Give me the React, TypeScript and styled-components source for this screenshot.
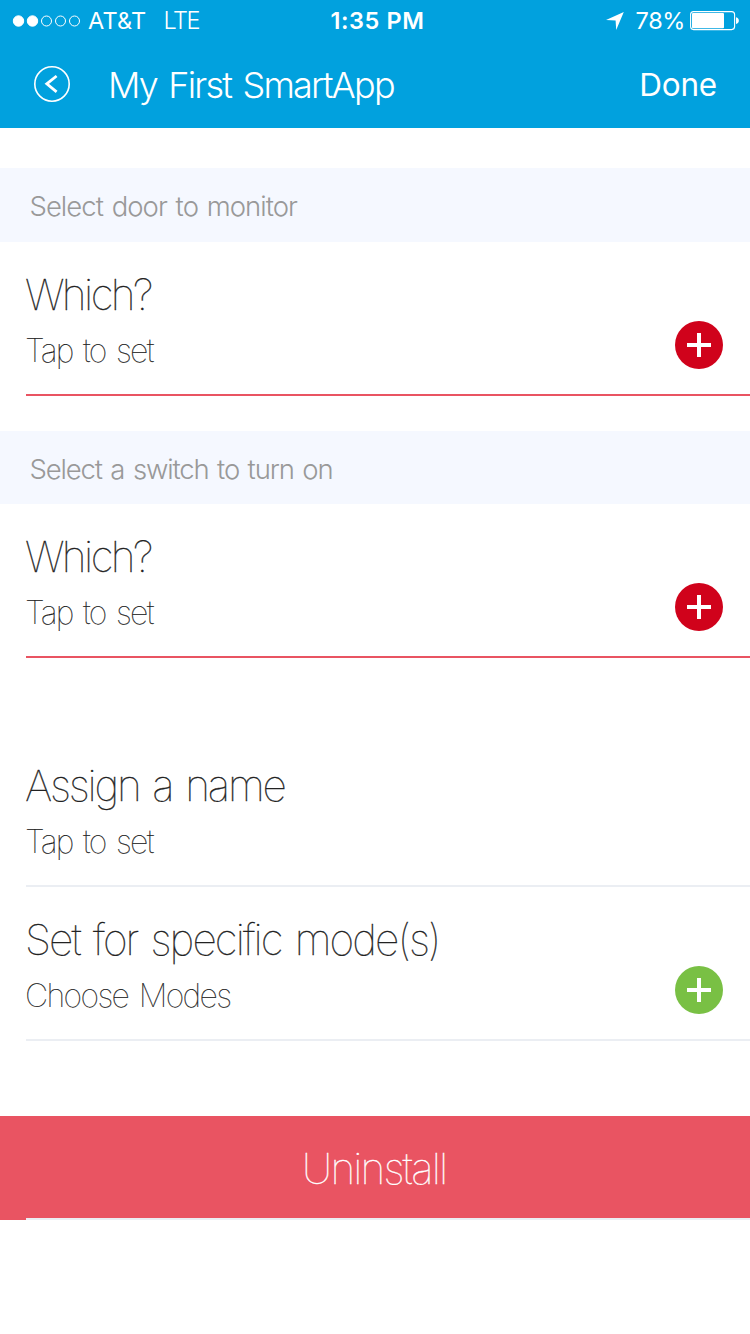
import React from "react";
import styled, { createGlobalStyle } from "styled-components";

const GlobalStyle = createGlobalStyle`
  * { box-sizing: border-box; }
  body { margin: 0; background: #fff; font-family: Inter, "Liberation Sans", sans-serif; }
`;

const Screen = styled.main`
  width: 750px;
  height: 1334px;
  overflow: hidden;
  background: #fff;
`;

const Header = styled.header`
  height: 128px;
  background: #01a1de;
  color: #fff;
`;

const StatusBar = styled.div`
  display: grid;
  grid-template-columns: 1fr auto 1fr;
  align-items: center;
  height: 42px;
  padding: 0 10px 0 12px;
`;

const StatusGroup = styled.div<{ $end?: boolean }>`
  display: flex;
  align-items: center;
  justify-content: ${(p) => (p.$end ? "flex-end" : "flex-start")};
`;

const StatusText = styled.span<{ $weight?: number; $spacing?: number; $left?: number }>`
  font-size: 23.5px;
  line-height: 42px;
  white-space: nowrap;
  font-weight: ${(p) => p.$weight ?? 400};
  letter-spacing: ${(p) => p.$spacing ?? 0}px;
  margin-left: ${(p) => p.$left ?? 0}px;
`;

const NavBar = styled.nav`
  display: flex;
  align-items: center;
  height: 86px;
  padding: 0 33px 2px 33px;
`;

const BackButton = styled.button`
  display: flex;
  padding: 0;
  border: 0;
  background: none;
  color: inherit;
`;

const NavTitle = styled.h1`
  flex: 1;
  margin: 1px 0 0 37px;
  font-size: 36px;
  font-weight: 300;
  letter-spacing: -1.8px;
  word-spacing: 3px;
  line-height: 44px;
`;

const DoneButton = styled.button`
  margin-top: 2px;
  padding: 0;
  border: 0;
  background: none;
  color: inherit;
  font: 400 31.5px/44px Inter, "Liberation Sans", sans-serif;
  letter-spacing: -0.2px;
`;

const Section = styled.section<{ $top: number }>`
  padding-top: ${(p) => p.$top}px;
`;

const SectionHeading = styled.h2<{ $height: number; $spacing: number }>`
  height: ${(p) => p.$height}px;
  margin: 0;
  padding: 2px 0 0 29.5px;
  background: #f5f8ff;
  color: #999;
  font-size: 27.5px;
  font-weight: 300;
  letter-spacing: ${(p) => p.$spacing}px;
  word-spacing: 2px;
  line-height: 72px;
`;

const Row = styled.div<{ $required?: boolean }>`
  display: flex;
  align-items: flex-start;
  justify-content: space-between;
  height: 154px;
  margin-left: 26px;
  padding: 28px 27px 0 0;
  border-bottom: 2px solid ${(p) => (p.$required ? "#e95462" : "#ebeef3")};
`;

const RowTitle = styled.div<{ $spacing: number }>`
  margin-left: -1px;
  color: #222;
  font-size: 42.5px;
  font-weight: 100;
  -webkit-text-stroke: 0.3px #222;
  letter-spacing: ${(p) => p.$spacing}px;
  word-spacing: 3px;
  line-height: 50px;
`;

const RowDetail = styled.div<{ $spacing: number }>`
  margin: 11px 0 0 -1px;
  color: #222;
  font-size: 32px;
  font-weight: 100;
  -webkit-text-stroke: 0.2px #222;
  letter-spacing: ${(p) => p.$spacing}px;
  word-spacing: 3px;
  line-height: 40px;
`;

const AddButton = styled.button`
  display: flex;
  margin-top: 51px;
  padding: 0;
  border: 0;
  background: none;
`;

const UninstallButton = styled.button`
  display: flex;
  flex-direction: column;
  width: 750px;
  height: 104px;
  margin-top: 75px;
  padding: 0;
  border: 0;
  background: #e95462;
  color: #fff;
  font: 100 42.5px/106px Inter, "Liberation Sans", sans-serif;
  letter-spacing: -1.9px;
`;

const UninstallLabel = styled.span`
  height: 102px;
  width: 748px;
  text-align: center;
  -webkit-text-stroke: 0.3px #fff;
`;

const Divider = styled.span`
  width: 724px;
  height: 2px;
  margin-left: 26px;
  background: #ebeef3;
`;

const Signal = () => (
  <svg width="69" height="14" viewBox="0 0 69 14" fill="none" stroke="#fff">
    {[0, 1, 2, 3, 4].map((i) => (
      <circle key={i} cx={6.5 + i * 14} cy="7" r={i < 2 ? 5.2 : 5} fill={i < 2 ? "#fff" : "none"} />
    ))}
  </svg>
);

const Location = () => (
  <svg width="18" height="18" viewBox="0 0 18 18">
    <path d="M17.8 0L10.2 18L9.6 8.6L0 7.9Z" fill="#fff" />
  </svg>
);

const Battery = () => (
  <svg width="50" height="20" viewBox="0 0 50 20">
    <rect x="0.6" y="0.6" width="44" height="18" rx="3" fill="none" stroke="#fff" strokeWidth="1.1" />
    <rect x="2" y="2" width="32" height="15.2" rx="1" fill="#fff" />
    <path d="M46 6.2C49.8 6.8 49.8 12.4 46 13Z" fill="#fff" />
  </svg>
);

const Add = ({ color }: { color: string }) => (
  <svg width="48" height="48" viewBox="0 0 48 48">
    <circle cx="24" cy="24" r="24" fill={color} />
    <path d="M24 12V36M12 24H36" stroke="#fff" strokeWidth="4" />
  </svg>
);

type SettingProps = {
  title: string;
  titleSpacing: number;
  detail: string;
  detailSpacing: number;
  required?: boolean;
  addColor?: string;
};

const Setting = ({ title, titleSpacing, detail, detailSpacing, required, addColor }: SettingProps) => (
  <Row $required={required}>
    <div>
      <RowTitle $spacing={titleSpacing}>{title}</RowTitle>
      <RowDetail $spacing={detailSpacing}>{detail}</RowDetail>
    </div>
    {addColor && (
      <AddButton aria-label="Add">
        <Add color={addColor} />
      </AddButton>
    )}
  </Row>
);

export default function App() {
  return (
    <Screen>
      <GlobalStyle />
      <Header>
        <StatusBar>
          <StatusGroup>
            <Signal />
            <StatusText $left={7} $spacing={0.2}>AT&amp;T</StatusText>
            <StatusText $left={17} $weight={300} $spacing={-1.4}>LTE</StatusText>
          </StatusGroup>
          <StatusText $weight={600} $spacing={0.6} $left={3}>1:35 PM</StatusText>
          <StatusGroup $end>
            <Location />
            <StatusText $left={12} $spacing={-0.4}>78%</StatusText>
            <StatusText $left={5} />
            <Battery />
          </StatusGroup>
        </StatusBar>
        <NavBar>
          <BackButton aria-label="Back">
            <svg width="38" height="38" viewBox="0 0 38 38" fill="none" stroke="#fff">
              <circle cx="19" cy="19" r="17.2" strokeWidth="1.6" />
              <path d="M23.6 11L13.8 18.8L23.6 26.8" strokeWidth="2.8" />
            </svg>
          </BackButton>
          <NavTitle>My First SmartApp</NavTitle>
          <DoneButton>Done</DoneButton>
        </NavBar>
      </Header>
      <Section $top={40}>
        <SectionHeading $height={74} $spacing={-0.97}>Select door to monitor</SectionHeading>
        <Setting title="Which?" titleSpacing={-2.6} detail="Tap to set" detailSpacing={-1.7} required addColor="#d0021b" />
      </Section>
      <Section $top={35}>
        <SectionHeading $height={73} $spacing={-1.16}>Select a switch to turn on</SectionHeading>
        <Setting title="Which?" titleSpacing={-2.6} detail="Tap to set" detailSpacing={-1.7} required addColor="#d0021b" />
      </Section>
      <Section $top={75}>
        <Setting title="Assign a name" titleSpacing={-2.2} detail="Tap to set" detailSpacing={-1.7} />
        <Setting title="Set for specific mode(s)" titleSpacing={-1.9} detail="Choose Modes" detailSpacing={-1.62} addColor="#79c044" />
      </Section>
      <UninstallButton>
        <UninstallLabel>Uninstall</UninstallLabel>
        <Divider />
      </UninstallButton>
    </Screen>
  );
}
